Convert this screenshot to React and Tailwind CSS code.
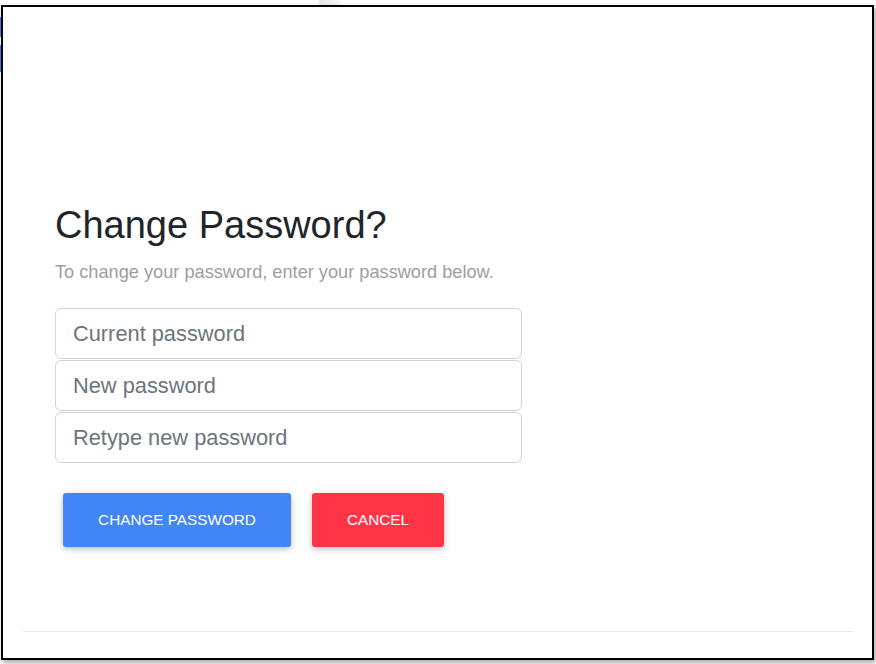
const FIELDS = ['Current password', 'New password', 'Retype new password']

export default function App() {
  return (
    <div className="relative w-[876px] h-[664px] bg-white overflow-hidden font-['Liberation_Sans',Arial,sans-serif]">
      {/* bits of the page behind the dialog */}
      <div className="absolute left-0 top-[17px] w-[2px] h-[20px] bg-[#4285f4]" />
      <div className="absolute left-0 top-[45px] w-[2px] h-[27px] bg-[#4285f4]" />
      <div className="absolute left-[319px] top-0 w-[22px] h-[5px] bg-gradient-to-r from-[#e6e6e6] to-[#f7f7f7]" />

      <div className="pt-[5px] pl-[1px]">
        <div className="relative flex flex-col w-[873px] h-[655px] border-2 border-black bg-white shadow-[2px_3px_5px_rgba(0,0,0,0.35)]">
          <div className="flex flex-col pl-[52px] pt-[199px]">
            <h1 className="text-[38px] leading-none text-[#212529]">Change Password?</h1>
            <p className="mt-[20px] text-[18.2px] leading-[17px] text-[#9e9e9e]">
              To change your password, enter your password below.
            </p>

            <div className="mt-[27px] flex flex-col gap-[1px] w-[467px]">
              {FIELDS.map((label) => (
                <input
                  key={label}
                  type="password"
                  placeholder={label}
                  className="h-[51px] w-full rounded-[6px] border border-[#ced4da] bg-white px-[17px] text-[21.8px] text-[#495057] placeholder:text-[#6c757d] outline-none"
                />
              ))}
            </div>

            <div className="mt-[30px] ml-[8px] flex gap-[21px]">
              <button className="w-[228px] h-[54px] rounded-[3px] bg-[#4285f4] text-[15.3px] uppercase text-white shadow-[0_2px_5px_rgba(0,0,0,0.16),0_2px_10px_rgba(0,0,0,0.12)]">
                Change password
              </button>
              <button className="w-[132px] h-[54px] rounded-[3px] bg-[#ff3547] text-[15.3px] uppercase text-white shadow-[0_2px_5px_rgba(0,0,0,0.16),0_2px_10px_rgba(0,0,0,0.12)]">
                Cancel
              </button>
            </div>
          </div>

          <div className="mt-auto mx-[20px] mb-[26px] border-t border-[#e5e5e5]" />
        </div>
      </div>
    </div>
  )
}
